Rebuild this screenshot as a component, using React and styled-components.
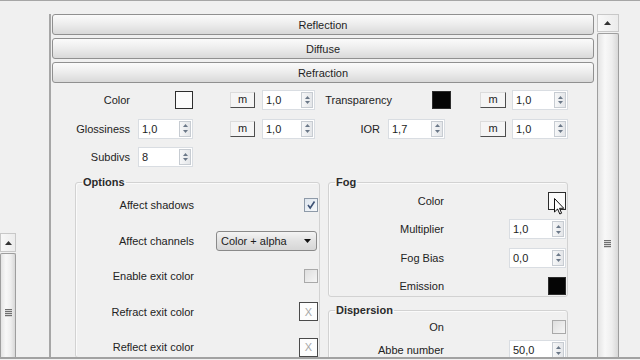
import React from "react";
import styled, { createGlobalStyle } from "styled-components";

const Global = createGlobalStyle`
  html, body { margin: 0; padding: 0; background: #f0f0f0; }
  body {
    font-family: "Liberation Sans", Arial, sans-serif;
    font-size: 11px;
    color: #232323;
  }
  * { box-sizing: border-box; }
`;

const Screen = styled.div`
  width: 640px;
  height: 360px;
  overflow: hidden;
  display: flex;
  flex-direction: column;
  border-top: 1px solid #a6a6a6;
  padding-bottom: 1px;
  background: #f0f0f0;
`;

const Body = styled.div`
  flex: 1;
  min-height: 0;
  display: flex;
  padding-top: 13px;
`;

const BottomRule = styled.div`
  height: 2px;
  background: #a2a2a2;
`;

const LeftGutter = styled.div`
  width: 49px;
  flex-shrink: 0;
  display: flex;
  flex-direction: column;
  padding-top: 219px;
`;

const Panel = styled.div`
  width: 547px;
  flex-shrink: 0;
  border-left: 2px solid #a6a6a6;
  padding: 0 2px 0 1px;
  overflow: hidden;
`;

const RightGutter = styled.div`
  flex: 1;
`;

/* scrollbars */
const VScroll = styled.div`
  width: 16px;
  flex: 1;
  flex-shrink: 0;
  display: flex;
  flex-direction: column;
  margin-left: ${(p) => p.$ml || 0}px;
`;

const ScrollArrow = styled.div`
  height: ${(p) => p.$h}px;
  border: 1px solid #c8c8c8;
  background: linear-gradient(90deg, #f8f8f8, #ececec);
  display: flex;
  align-items: center;
  justify-content: center;
`;

const Thumb = styled.div`
  flex: 1;
  margin-top: 1px;
  border: 1px solid #9e9e9e;
  border-bottom: none;
  border-radius: 2px 2px 0 0;
  background: linear-gradient(90deg, #e4e4e4, #f8f8f8 35%, #eeeeee 70%, #d8d8d8);
  padding-top: ${(p) => p.$grip}px;
  display: flex;
  flex-direction: column;
  align-items: center;
`;

const Grip = styled.div`
  width: 7px;
  height: 8px;
  background: repeating-linear-gradient(#6f6f6f 0 1px, #d6d6d6 1px 2px);
`;

const UpGlyph = () => (
  <svg width="7" height="4" viewBox="0 0 7 4">
    <path d="M0 4 L3.5 0 L7 4 Z" fill="#333" />
  </svg>
);

/* rollout headers */
const Rollouts = styled.div`
  display: flex;
  flex-direction: column;
  gap: 3px;
`;

const RolloutButton = styled.div`
  height: 21px;
  border: 1px solid #909090;
  border-radius: 3px;
  background: linear-gradient(#fbfbfb, #ececec 50%, #d9d9d9);
  display: flex;
  align-items: center;
  justify-content: center;
  color: #1f1f1f;
`;

/* top parameter grid */
const Params = styled.div`
  display: grid;
  grid-template-columns: 86px 92px 32px 53px 73px 92px 32px 56px;
  grid-auto-rows: 20px;
  row-gap: 8.5px;
  align-items: center;
  margin-top: 7px;
`;

const Label = styled.span`
  justify-self: end;
  white-space: nowrap;
  padding-right: ${(p) => (p.$pr ?? 8)}px;
  margin-right: ${(p) => p.$mr || 0}px;
`;

const Swatch = styled.div`
  position: relative;
  width: ${(p) => p.$w || 18}px;
  height: 18px;
  margin-left: ${(p) => p.$ml || 0}px;
  border: 1px solid #2d2d2d;
  background: ${(p) => (p.$dark ? "#050505" : "#fbfbfb")};
  justify-self: ${(p) => (p.$end ? "end" : "start")};
`;

const MButton = styled.div`
  width: ${(p) => p.$w || 25}px;
  height: 16px;
  background: #f5f5f5;
  border: 1px solid;
  border-color: #dcdcdc #4e4e4e #4e4e4e #dcdcdc;
  display: flex;
  align-items: center;
  justify-content: center;
  padding-bottom: 2px;
  font-size: 11px;
`;

const SpinBox = styled.div`
  width: ${(p) => p.$w}px;
  height: 20px;
  display: flex;
  border: 1px solid #d9dde2;
  background: #fff;
  justify-self: ${(p) => (p.$end ? "end" : "start")};
`;

const SpinValue = styled.span`
  flex: 1;
  padding-left: 3px;
  line-height: 18px;
  color: #1c1c1c;
`;

const SpinArrows = styled.div`
  width: 12px;
  margin: 1px;
  border: 1px solid #c7ccd2;
  background: linear-gradient(90deg, #f6f7f8, #e4e6e9);
  display: flex;
  flex-direction: column;
  align-items: center;
  justify-content: space-evenly;
`;

const Spinner = ({ w, value, end }) => (
  <SpinBox $w={w} $end={end}>
    <SpinValue>{value}</SpinValue>
    <SpinArrows>
      <svg width="5" height="3" viewBox="0 0 5 3">
        <path d="M0 3 L2.5 0 L5 3 Z" fill="#6b7888" />
      </svg>
      <svg width="5" height="3" viewBox="0 0 5 3">
        <path d="M0 0 L2.5 3 L5 0 Z" fill="#6b7888" />
      </svg>
    </SpinArrows>
  </SpinBox>
);

/* group boxes */
const Groups = styled.div`
  display: grid;
  grid-template-columns: 245px 240px;
  column-gap: 8px;
  align-items: start;
  margin: 9px 0 0 23px;
`;

const Column = styled.div`
  display: flex;
  flex-direction: column;
  gap: 7.5px;
`;

const Group = styled.fieldset`
  margin: 0;
  min-width: 0;
  padding: ${(p) => p.$pt}px 1px 0 0;
  border: 1px solid #d2d2d2;
  border-radius: 3px;
  box-shadow: inset 1px 1px 0 #fafafa;
  display: flex;
  flex-direction: column;
  gap: ${(p) => p.$gap}px;
`;

const Legend = styled.legend`
  font-weight: bold;
  line-height: 13px;
  padding: 0 1px;
  margin-left: 6px;
  color: #2b2b2b;
`;

const GroupRow = styled.div`
  height: 20px;
  display: grid;
  grid-template-columns: ${(p) => p.$lw}px 1fr;
  align-items: center;
`;

const CheckBox = styled.div`
  justify-self: end;
  width: 14px;
  height: 14px;
  border: 1px solid ${(p) => (p.$on ? "#8e9aa8" : "#a9a9a9")};
  background: ${(p) =>
    p.$on
      ? "linear-gradient(135deg, #dde5ee, #f7f9fb)"
      : "linear-gradient(135deg, #dedede, #f6f6f6)"};
  display: flex;
  align-items: center;
  justify-content: center;
`;

const XBox = styled.div`
  justify-self: end;
  width: 19px;
  height: 19px;
  border: 1px solid #4a4a4a;
  background: #fdfdfd;
  color: #a8a8a8;
  display: flex;
  align-items: center;
  justify-content: center;
  font-size: 11px;
`;

const Dropdown = styled.div`
  justify-self: end;
  margin-right: 1px;
  width: 101px;
  height: 20px;
  border: 1px solid #8a8a8a;
  border-radius: 3px;
  background: linear-gradient(#f4f4f4, #e2e2e2 50%, #d6d6d6);
  display: flex;
  align-items: center;
  justify-content: space-between;
  padding: 0 5px 0 4px;
  color: #1c1c1c;
`;

const Cursor = styled.svg`
  position: absolute;
  left: 5px;
  top: 5px;
  overflow: visible;
`;

export default function App() {
  return (
    <>
      <Global />
      <Screen>
        <Body>
          <LeftGutter>
            <VScroll>
              <ScrollArrow $h={19}>
                <UpGlyph />
              </ScrollArrow>
              <Thumb $grip={55}>
                <Grip />
              </Thumb>
            </VScroll>
          </LeftGutter>

          <Panel>
            <Rollouts>
              <RolloutButton>Reflection</RolloutButton>
              <RolloutButton>Diffuse</RolloutButton>
              <RolloutButton>Refraction</RolloutButton>
            </Rollouts>

            <Params>
              <Label>Color</Label>
              <Swatch $ml={37} />
              <MButton>m</MButton>
              <Spinner w={53} value="1,0" />
              <Label $mr={-12}>Transparency</Label>
              <Swatch $ml={44} $w={19} $dark />
              <MButton $w={26}>m</MButton>
              <Spinner w={56} value="1,0" />

              <Label>Glossiness</Label>
              <Spinner w={55} value="1,0" />
              <MButton>m</MButton>
              <Spinner w={53} value="1,0" />
              <Label>IOR</Label>
              <Spinner w={57} value="1,7" />
              <MButton $w={26}>m</MButton>
              <Spinner w={56} value="1,0" />

              <Label>Subdivs</Label>
              <Spinner w={55} value="8" />
            </Params>

            <Groups>
              <Group $pt={6} $gap={15.5}>
                <Legend>Options</Legend>
                <GroupRow $lw={118}>
                  <Label $pr={0}>Affect shadows</Label>
                  <CheckBox $on>
                    <svg width="10" height="10" viewBox="0 0 10 10">
                      <path d="M2 5 L4.2 8 L8.5 1.5" fill="none" stroke="#3d5275" strokeWidth="1.6" />
                    </svg>
                  </CheckBox>
                </GroupRow>
                <GroupRow $lw={118}>
                  <Label $pr={0}>Affect channels</Label>
                  <Dropdown>
                    <span>Color + alpha</span>
                    <svg width="7" height="4" viewBox="0 0 7 4">
                      <path d="M0 0 L3.5 4 L7 0 Z" fill="#111" />
                    </svg>
                  </Dropdown>
                </GroupRow>
                <GroupRow $lw={118}>
                  <Label $pr={0}>Enable exit color</Label>
                  <CheckBox />
                </GroupRow>
                <GroupRow $lw={118}>
                  <Label $pr={0}>Refract exit color</Label>
                  <XBox>X</XBox>
                </GroupRow>
                <GroupRow $lw={118}>
                  <Label $pr={0}>Reflect exit color</Label>
                  <XBox>X</XBox>
                </GroupRow>
              </Group>

              <Column>
                <Group $pt={2} $gap={8.33}>
                  <Legend>Fog</Legend>
                  <GroupRow $lw={115}>
                    <Label $pr={0}>Color</Label>
                    <Swatch $end>
                      <Cursor width="11" height="17" viewBox="0 0 11 17">
                        <path
                          d="M0.5 0.5 L0.5 14 L3.6 11 L5.8 16 L7.6 15.2 L5.5 10.3 L9.8 10.3 Z"
                          fill="#fff"
                          stroke="#111"
                          strokeWidth="1"
                          strokeLinejoin="round"
                        />
                      </Cursor>
                    </Swatch>
                  </GroupRow>
                  <GroupRow $lw={115}>
                    <Label $pr={0}>Multiplier</Label>
                    <Spinner w={57} value="1,0" end />
                  </GroupRow>
                  <GroupRow $lw={115}>
                    <Label $pr={0}>Fog Bias</Label>
                    <Spinner w={57} value="0,0" end />
                  </GroupRow>
                  <GroupRow $lw={115}>
                    <Label $pr={0}>Emission</Label>
                    <Swatch $end $dark />
                  </GroupRow>
                </Group>

                <Group $pt={0} $gap={3}>
                  <Legend>Dispersion</Legend>
                  <GroupRow $lw={115}>
                    <Label $pr={0}>On</Label>
                    <CheckBox />
                  </GroupRow>
                  <GroupRow $lw={115}>
                    <Label $pr={0}>Abbe number</Label>
                    <Spinner w={57} value="50,0" end />
                  </GroupRow>
                </Group>
              </Column>
            </Groups>
          </Panel>

          <VScroll $ml={1}>
            <ScrollArrow $h={18}>
              <UpGlyph />
            </ScrollArrow>
            <Thumb $grip={206}>
              <Grip />
            </Thumb>
          </VScroll>
          <RightGutter />
        </Body>
        <BottomRule />
      </Screen>
    </>
  );
}
